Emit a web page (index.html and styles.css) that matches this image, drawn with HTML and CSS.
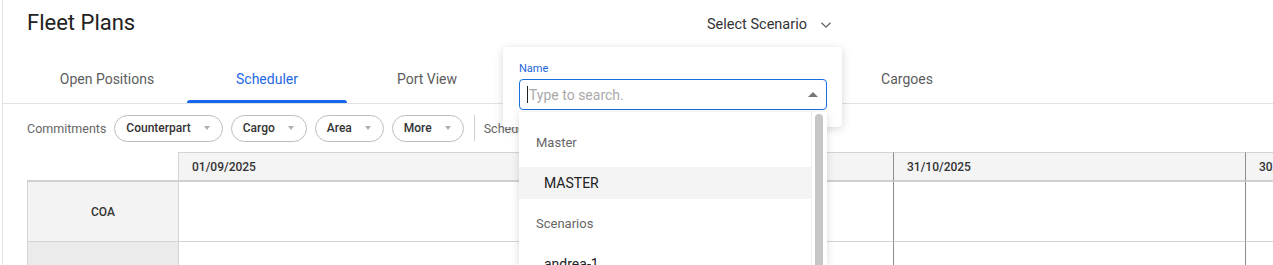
FILE: index.html
```html
<!DOCTYPE html>
<html lang="en">
<head>
    <meta charset="UTF-8">
    <meta name="viewport" content="width=device-width, initial-scale=1.0">
    <title>Fleet Plans</title>
    <link rel="stylesheet" href="styles.css">
</head>
<body>
    <div class="app">
        <div class="topbar">
            <h1 class="title">Fleet Plans</h1>
            <button class="scenario-select">
                Select Scenario
                <svg class="chevron" width="12" height="8" viewBox="0 0 12 8"><path d="M1.5 1.8 L6 6.2 L10.5 1.8" fill="none" stroke="#666" stroke-width="1.3"/></svg>
            </button>
        </div>
        <nav class="tabs">
            <a class="tab">Open Positions</a>
            <a class="tab active">Scheduler</a>
            <a class="tab">Port View</a>
            <a class="tab">Vessels</a>
            <a class="tab">Voyages</a>
            <a class="tab">Cargoes</a>
        </nav>
        <div class="filters">
            <span class="filter-label">Commitments</span>
            <button class="chip">Counterpart <i class="caret"></i></button>
            <button class="chip">Cargo <i class="caret"></i></button>
            <button class="chip">Area <i class="caret"></i></button>
            <button class="chip">More <i class="caret"></i></button>
            <span class="divider"></span>
            <span class="filter-label">Schedule</span>
        </div>
        <div class="timeline">
            <div class="corner"></div>
            <div class="col-head">01/09/2025</div>
            <div class="col-head month">31/10/2025</div>
            <div class="col-head month">30/11/2025</div>

            <div class="row-head">COA</div>
            <div class="cell"></div>
            <div class="cell month"></div>
            <div class="cell month"></div>

            <div class="row-head alt"></div>
            <div class="cell"></div>
            <div class="cell month"></div>
            <div class="cell month"></div>
        </div>
    </div>

    <!-- scenario picker, opened -->
    <div class="scenario-popup">
        <label class="field-label">Name</label>
        <div class="search-box">
            <span class="cursor"></span>
            <span class="placeholder">Type to search.</span>
            <i class="up-caret"></i>
        </div>
    </div>
    <div class="scenario-list">
        <div class="options">
            <div class="group-title">Master</div>
            <div class="option selected">MASTER</div>
            <div class="group-title">Scenarios</div>
            <div class="option">andrea-1</div>
        </div>
        <div class="scrollbar"></div>
    </div>
</body>
</html>
```

FILE: styles.css
```css
body {
    margin: 0;
    height: 265px;
    overflow: hidden;
    font-family: Roboto, "Noto Sans", sans-serif;
    color: #212121;
    background: #ffffff;
}
.app {
    margin-left: 2px;
    border-left: 1px solid #e4e4e4;
    min-height: 265px;
}
.topbar {
    display: flex;
    align-items: center;
    height: 47px;
    padding-left: 24px;
}
.title {
    margin: 0;
    width: 680px;
    font-size: 22px;
    font-weight: 400;
    line-height: 26px;
    color: #222;
    padding-bottom: 2px;
}
.scenario-select {
    display: flex;
    align-items: center;
    gap: 13px;
    padding: 0;
    margin-top: 2px;
    border: none;
    background: none;
    font-family: inherit;
    font-size: 14.5px;
    color: #333;
}
.tabs {
    display: flex;
    height: 56px;
    padding-left: 24px;
    border-bottom: 1px solid #e2e2e2;
}
.tab {
    position: relative;
    width: 160px;
    display: flex;
    align-items: center;
    justify-content: center;
    padding-top: 8px;
    font-size: 14px;
    color: #5c5c5c;
}
.tab.active {
    color: #1f68e3;
}
.tab.active::after {
    content: '';
    position: absolute;
    left: 0;
    right: 0;
    bottom: 0;
    height: 3px;
    border-radius: 3px 3px 0 0;
    background: #1566ea;
}
.filters {
    display: flex;
    align-items: center;
    gap: 8px;
    height: 48px;
    padding-left: 24px;
}
.filter-label {
    font-size: 12.5px;
    color: #666;
}
.chip {
    display: flex;
    align-items: center;
    height: 27px;
    padding: 0 12px 0 11px;
    border: 1px solid #bdbdbd;
    border-radius: 14px;
    background: #fff;
    font-family: inherit;
    font-size: 12px;
    font-weight: 500;
    color: #333;
}
.caret {
    margin-left: 13px;
    border-left: 3.5px solid transparent;
    border-right: 3.5px solid transparent;
    border-top: 4px solid #b0b0b0;
}
.divider {
    width: 1px;
    height: 26px;
    margin: 0 1px 0 2px;
    background: #d0d0d0;
}
.timeline {
    display: grid;
    grid-template-columns: 151px 715px 352px 1fr;
    grid-template-rows: 30px 60px 40px;
    margin-left: 24px;
}
.corner {
    border-bottom: 2px solid #d0d0d0;
}
.col-head {
    display: flex;
    align-items: center;
    padding-left: 13px;
    background: #f4f4f4;
    border-top: 1px solid #d4d4d4;
    border-left: 1px solid #d4d4d4;
    border-bottom: 2px solid #d0d0d0;
    font-size: 12px;
    font-weight: 500;
    color: #333;
    white-space: nowrap;
    overflow: hidden;
}
.col-head.month,
.cell.month {
    border-left-color: #8e8e8e;
}
.row-head {
    display: flex;
    align-items: center;
    justify-content: center;
    background: #f3f3f3;
    border-left: 1px solid #d4d4d4;
    border-bottom: 1px solid #d4d4d4;
    font-size: 12px;
    font-weight: 500;
    color: #333;
}
.row-head.alt {
    background: #ebebeb;
}
.cell {
    border-left: 1px solid #d4d4d4;
    border-bottom: 1px solid #d4d4d4;
}
.scenario-popup {
    position: absolute;
    left: 503px;
    top: 47px;
    width: 339px;
    height: 80px;
    box-sizing: border-box;
    padding: 15px 15px 0 16px;
    background: #fff;
    border-radius: 4px;
    box-shadow: 0 2px 10px rgba(0, 0, 0, 0.16);
}
.field-label {
    display: block;
    font-size: 11px;
    line-height: 14px;
    color: #1a66e0;
}
.search-box {
    display: flex;
    align-items: center;
    height: 31px;
    margin-top: 3px;
    padding: 0 8px 0 7px;
    box-sizing: border-box;
    border: 1px solid #1a6fe0;
    border-radius: 4px;
}
.cursor {
    width: 1px;
    height: 17px;
    background: #222;
    margin-right: 1px;
}
.placeholder {
    flex: 1;
    font-size: 14px;
    color: #a9a9a9;
}
.up-caret {
    border-left: 5px solid transparent;
    border-right: 5px solid transparent;
    border-bottom: 5px solid #777;
}
.scenario-list {
    position: absolute;
    left: 519px;
    top: 112px;
    width: 308px;
    bottom: 0;
    display: flex;
    background: #fff;
    box-shadow: 0 2px 8px rgba(0, 0, 0, 0.15);
}
.options {
    flex: 1;
    padding-top: 6px;
    border-right: 1px solid #f0f0f0;
}
.group-title {
    height: 40px;
    line-height: 40px;
    margin: 5px 0 4px;
    padding-left: 17px;
    font-size: 13px;
    color: #666;
}
.option {
    height: 32px;
    line-height: 32px;
    padding-left: 25px;
    font-size: 14px;
    color: #222;
}
.option.selected {
    background: #f4f4f4;
}
.scrollbar {
    width: 8px;
    margin: 2px 4px 0 3px;
    border-radius: 4px 4px 0 0;
    background: #c6c6c6;
}
```
